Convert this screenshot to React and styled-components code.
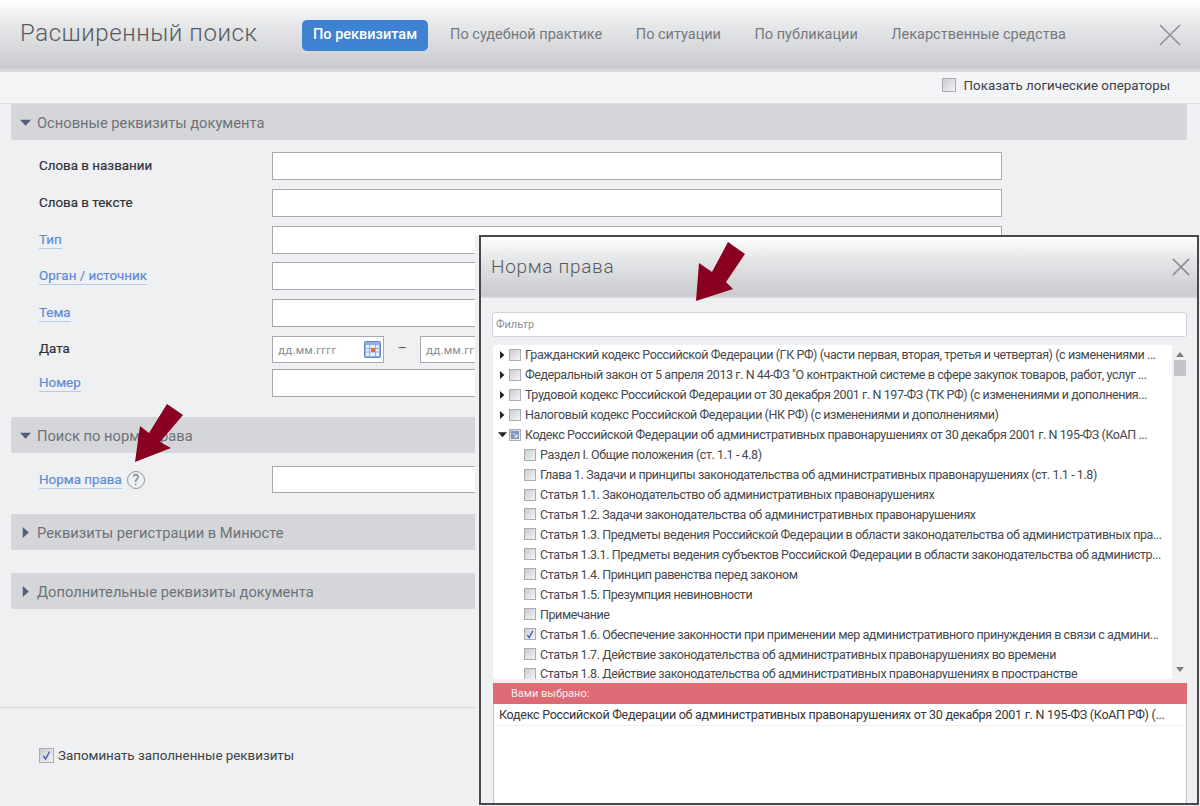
import React from "react";
import styled, { createGlobalStyle } from "styled-components";

const GlobalStyle = createGlobalStyle`
  html, body { margin: 0; padding: 0; background: #eff0f2; }
  body { font-family: Roboto, "Liberation Sans", sans-serif; }
  * { box-sizing: border-box; }
`;

const Page = styled.div`
  position: relative;
  width: 1200px;
  height: 806px;
  overflow: hidden;
  display: flex;
  flex-direction: column;
  background: #eff0f2;
`;

const Header = styled.header`
  height: 72px;
  flex: none;
  display: flex;
  align-items: flex-start;
  padding: 20px 19px 0 20px;
  background: linear-gradient(#ffffff, #e9eaec 30%, #c9cbce 94%, #d8d9dc 97%);
`;

const Title = styled.h1`
  margin: 0;
  width: 282px;
  font-size: 24px;
  line-height: 27px;
  font-weight: 300;
  letter-spacing: 0.57px;
  color: #565a60;
`;

const Tabs = styled.nav`
  display: flex;
  flex: 1;
  gap: 33.5px;
`;

const Tab = styled.span`
  height: 31px;
  line-height: 30px;
  font-size: 14.5px;
  font-weight: ${(p) => (p.$active ? 500 : 400)};
  color: ${(p) => (p.$active ? "#fff" : "#74787f")};
  background: ${(p) => (p.$active ? "#3f82d2" : "transparent")};
  border-radius: 5px;
  padding: ${(p) => (p.$active ? "0 11px" : "0")};
  margin-right: ${(p) => (p.$active ? "-11.5px" : "0")};
`;

const HeaderClose = styled.div`
  padding-top: 4px;
`;

const CloseIcon = styled.svg`
  display: block;
  flex: none;
  stroke: #8d9095;
  stroke-width: ${(p) => p.$weight || 1.6};
  fill: none;
`;

const Toolbar = styled.div`
  height: 32px;
  flex: none;
  display: flex;
  align-items: center;
  justify-content: flex-end;
  gap: 8px;
  padding: 0 30px 5px 0;
  background: #f3f4f6;
  border-bottom: 1px solid #dcdee0;
  font-size: 13.35px;
  color: #3d4046;
`;

const Box = styled.span`
  display: inline-flex;
  flex: none;
  align-items: center;
  justify-content: center;
  width: ${(p) => p.$size || 14}px;
  height: ${(p) => p.$size || 14}px;
  border: 1px solid #a9adb3;
  background: linear-gradient(135deg, #c9ccd1, #f4f5f6);
`;

const Form = styled.main`
  flex: 1;
  padding: 0 13px 0 11px;
`;

const Section = styled.div`
  height: 36px;
  display: flex;
  align-items: center;
  gap: 6px;
  padding: 2px 0 0 9px;
  margin-bottom: ${(p) => p.$after}px;
  background: #d4d6d9;
  border-radius: 2px;
  font-size: 14.7px;
  color: #6e7278;
`;

const Caret = styled.svg`
  display: block;
  flex: none;
  margin-top: ${(p) => (p.$lift ? "-2px" : "0")};
  fill: ${(p) => p.$color || "#4f5f7c"};
`;

const Row = styled.div`
  display: flex;
  align-items: center;
  min-height: 27px;
  padding-left: 28px;
  margin-bottom: ${(p) => p.$after}px;
`;

const Label = styled.span`
  width: 233px;
  flex: none;
  padding-bottom: 2px;
  font-size: 13.4px;
  color: #2f3237;
  -webkit-text-stroke: 0.2px #2f3237;
`;

const LinkLabel = styled.span`
  font-size: 13.4px;
  color: #5d8bd8;
  -webkit-text-stroke: 0.2px #5d8bd8;
  border-bottom: 1px solid #b5c9ea;
  padding-bottom: 1px;
`;

const LinkCell = styled.span`
  width: 233px;
  flex: none;
  display: flex;
  align-items: center;
  gap: 5px;
  margin-top: 1px;
`;

const Help = styled.span`
  width: 18px;
  height: 18px;
  border: 1.5px solid #96999d;
  border-radius: 50%;
  display: inline-flex;
  align-items: center;
  justify-content: center;
  font-size: 14px;
  color: #77797d;
`;

const Input = styled.div`
  width: 730px;
  height: ${(p) => p.$height || 28}px;
  background: #fff;
  border: 1.5px solid #a6a9af;
`;

const DateInput = styled.div`
  width: 112px;
  height: 27px;
  flex: none;
  display: flex;
  align-items: center;
  justify-content: space-between;
  padding: 0 2px 0 5px;
  background: #fff;
  border: 1.5px solid #a6a9af;
  font-size: 11.5px;
  letter-spacing: 0.2px;
  color: #8a8d92;
`;

const Dash = styled.span`
  width: 36px;
  padding-bottom: 4px;
  text-align: center;
  font-size: 14px;
  color: #55585d;
`;

const Footer = styled.footer`
  height: 99px;
  flex: none;
  display: flex;
  align-items: flex-start;
  gap: 4px;
  padding: 40px 0 0 39px;
  margin-right: 13px;
  border-top: 1.5px solid #d3d5d8;
  font-size: 13.35px;
  color: #3d4046;
`;

const Arrow = styled.svg`
  position: absolute;
  left: 0;
  top: 0;
  z-index: 5;
  pointer-events: none;
`;

const Dialog = styled.section`
  position: absolute;
  left: 479px;
  top: 235px;
  width: 720px;
  height: 570px;
  z-index: 2;
  display: flex;
  flex-direction: column;
  background: #eff0f2;
  border: 2px solid #46484b;
  box-shadow: -4px 0 0 #eff0f2;
`;

const DialogHeader = styled.div`
  height: 61px;
  flex: none;
  display: flex;
  align-items: center;
  justify-content: space-between;
  padding: 0 7px 2px 10px;
  background: linear-gradient(#ffffff, #e6e7e9 35%, #c9cbce 95%, #d8d9dc);
`;

const DialogTitle = styled.h2`
  margin: 0;
  font-size: 19px;
  font-weight: 300;
  letter-spacing: 0.7px;
  color: #565a60;
`;

const Filter = styled.div`
  height: 25px;
  flex: none;
  margin: 14px 10px 8px 11px;
  padding-left: 3px;
  display: flex;
  align-items: center;
  background: #fff;
  border: 1.5px solid #cfd2d6;
  border-radius: 3px;
  font-size: 11px;
  color: #8d9096;
`;

const TreeArea = styled.div`
  height: 334px;
  flex: none;
  display: flex;
  margin: 0 10px 4px 12px;
`;

const TreeList = styled.ul`
  width: 679px;
  flex: none;
  margin: 0;
  padding: 0;
  list-style: none;
  overflow: hidden;
  background: #fff;
`;

const TreeRow = styled.li`
  height: 19.95px;
  display: flex;
  align-items: center;
  padding-left: ${(p) => (p.$child ? 31 : 5)}px;
  white-space: nowrap;
  font-size: 12.5px;
  letter-spacing: -0.42px;
  color: #45484d;
`;

const Expander = styled.span`
  width: 11px;
  flex: none;
  display: flex;
`;

const TreeText = styled.span`
  margin-left: 4px;
`;

const Scrollbar = styled.div`
  flex: 1;
  display: flex;
  flex-direction: column;
  align-items: center;
  padding-top: 7px;
`;

const Thumb = styled.div`
  width: 12px;
  height: 16px;
  margin: 3px 0 auto;
  background: #c2c4c7;
`;

const ScrollArrow = styled.svg`
  display: block;
  fill: #7b7e83;
  margin-bottom: ${(p) => p.$after || 0}px;
`;

const ChosenBar = styled.div`
  height: 21px;
  flex: none;
  margin: 0 10px 0 12px;
  padding-left: 18px;
  display: flex;
  align-items: center;
  background: #dd6a75;
  font-size: 11px;
  color: #fbeeef;
`;

const ChosenList = styled.div`
  flex: 1;
  margin: 0 10px 0 12px;
  background: #fff;
  border-left: 1px solid #bfc1c5;
  border-right: 1px solid #bfc1c5;
`;

const ChosenRow = styled.div`
  height: 22px;
  display: flex;
  align-items: center;
  padding-left: 5px;
  white-space: nowrap;
  border-bottom: 1px solid #f0f0f0;
  font-size: 12.5px;
  letter-spacing: -0.27px;
  color: #33363b;
`;

const tabs = ["По судебной практике", "По ситуации", "По публикации", "Лекарственные средства"];

const treeRows = [
  { text: "Гражданский кодекс Российской Федерации (ГК РФ) (части первая, вторая, третья и четвертая) (с изменениями ...", caret: "right" },
  { text: "Федеральный закон от 5 апреля 2013 г. N 44-ФЗ \"О контрактной системе в сфере закупок товаров, работ, услуг ...", caret: "right" },
  { text: "Трудовой кодекс Российской Федерации от 30 декабря 2001 г. N 197-ФЗ (ТК РФ) (с изменениями и дополнения...", caret: "right" },
  { text: "Налоговый кодекс Российской Федерации (НК РФ) (с изменениями и дополнениями)", caret: "right" },
  { text: "Кодекс Российской Федерации об административных правонарушениях от 30 декабря 2001 г. N 195-ФЗ (КоАП ...", caret: "down", mark: "partial" },
  { text: "Раздел I. Общие положения (ст. 1.1 - 4.8)" },
  { text: "Глава 1. Задачи и принципы законодательства об административных правонарушениях (ст. 1.1 - 1.8)" },
  { text: "Статья 1.1. Законодательство об административных правонарушениях" },
  { text: "Статья 1.2. Задачи законодательства об административных правонарушениях" },
  { text: "Статья 1.3. Предметы ведения Российской Федерации в области законодательства об административных пра..." },
  { text: "Статья 1.3.1. Предметы ведения субъектов Российской Федерации в области законодательства об администр..." },
  { text: "Статья 1.4. Принцип равенства перед законом" },
  { text: "Статья 1.5. Презумпция невиновности" },
  { text: "Примечание" },
  { text: "Статья 1.6. Обеспечение законности при применении мер административного принуждения в связи с админи...", mark: "check" },
  { text: "Статья 1.7. Действие законодательства об административных правонарушениях во времени" },
  { text: "Статья 1.8. Действие законодательства об административных правонарушениях в пространстве" },
];

function Cross({ size, weight }) {
  return (
    <CloseIcon width={size} height={size} viewBox="0 0 22 22" $weight={weight}>
      <path d="M1 1 L21 21 M21 1 L1 21" />
    </CloseIcon>
  );
}

function CaretIcon({ dir, size = 10, color, lift }) {
  return (
    <Caret width={size} height={size} viewBox="0 0 10 10" $color={color} $lift={lift}>
      {dir === "down" ? <path d="M0 2.5 H10 L5 8 Z" /> : <path d="M2.5 0 L8 5 L2.5 10 Z" />}
    </Caret>
  );
}

function Check() {
  return (
    <svg width="11" height="11" viewBox="0 0 11 11">
      <path d="M2.5 6 L4.6 9 L8.6 1.5" fill="none" stroke="#4a62b0" strokeWidth="1.5" />
    </svg>
  );
}

function Partial() {
  return (
    <svg width="10" height="10" viewBox="0 0 10 10">
      <rect x="1" y="1" width="8" height="8" fill="#7f97c4" />
      <path d="M3 3 L7 7 M7 4 V7 H4" fill="none" stroke="#e8edf6" strokeWidth="1" />
    </svg>
  );
}

function CalendarIcon() {
  return (
    <svg width="17" height="17" viewBox="0 0 17 17">
      <rect x="0.5" y="0.5" width="16" height="16" rx="1" fill="#8fb0e4" stroke="#5f87c8" />
      <rect x="2" y="4" width="13" height="11" fill="#e8eef9" />
      <path d="M2 7.5 H15 M2 11 H15 M5.5 4 V15 M11.5 4 V15" stroke="#8fb0e4" />
      <rect x="7" y="7" width="4" height="4" fill="#e2683f" />
    </svg>
  );
}

function Field({ name }) {
  return (
    <LinkCell>
      <LinkLabel>{name}</LinkLabel>
    </LinkCell>
  );
}

function App() {
  return (
    <>
      <GlobalStyle />
      <Page>
        <Header>
          <Title>Расширенный поиск</Title>
          <Tabs>
            <Tab $active>По реквизитам</Tab>
            {tabs.map((t) => (
              <Tab key={t}>{t}</Tab>
            ))}
          </Tabs>
          <HeaderClose>
            <Cross size={22} />
          </HeaderClose>
        </Header>
        <Toolbar>
          <Box />
          <span>Показать логические операторы</span>
        </Toolbar>
        <Form>
          <Section $after={12}>
            <CaretIcon dir="down" size={11} lift />
            Основные реквизиты документа
          </Section>
          <Row $after={9}>
            <Label>Слова в названии</Label>
            <Input />
          </Row>
          <Row $after={9}>
            <Label>Слова в тексте</Label>
            <Input />
          </Row>
          <Row $after={8}>
            <Field name="Тип" />
            <Input />
          </Row>
          <Row $after={9}>
            <Field name="Орган / источник" />
            <Input />
          </Row>
          <Row $after={9}>
            <Field name="Тема" />
            <Input />
          </Row>
          <Row $after={6}>
            <Label>Дата</Label>
            <DateInput>
              дд.мм.гггг
              <CalendarIcon />
            </DateInput>
            <Dash>–</Dash>
            <DateInput>дд.мм.гггг</DateInput>
          </Row>
          <Row $after={20}>
            <Field name="Номер" />
            <Input />
          </Row>
          <Section $after={13}>
            <CaretIcon dir="down" size={11} lift />
            Поиск по норме права
          </Section>
          <Row $after={21}>
            <LinkCell>
              <LinkLabel>Норма права</LinkLabel>
              <Help>?</Help>
            </LinkCell>
            <Input $height={27} />
          </Row>
          <Section $after={23}>
            <CaretIcon dir="right" size={11} lift />
            Реквизиты регистрации в Минюсте
          </Section>
          <Section $after={0}>
            <CaretIcon dir="right" size={11} lift />
            Дополнительные реквизиты документа
          </Section>
        </Form>
        <Footer>
          <Box $size={15}>
            <Check />
          </Box>
          <span>Запоминать заполненные реквизиты</span>
        </Footer>

        <Dialog>
          <DialogHeader>
            <DialogTitle>Норма права</DialogTitle>
            <Cross size={18} weight={2} />
          </DialogHeader>
          <Filter>Фильтр</Filter>
          <TreeArea>
            <TreeList>
              {treeRows.map((row) => (
                <TreeRow key={row.text} $child={!row.caret}>
                  {row.caret && (
                    <Expander>
                      <CaretIcon dir={row.caret} size={row.caret === "down" ? 9 : 8} color="#222428" />
                    </Expander>
                  )}
                  <Box $size={12}>
                    {row.mark === "check" && <Check />}
                    {row.mark === "partial" && <Partial />}
                  </Box>
                  <TreeText>{row.text}</TreeText>
                </TreeRow>
              ))}
            </TreeList>
            <Scrollbar>
              <ScrollArrow width="8" height="5" viewBox="0 0 8 5">
                <path d="M0 5 L4 0 L8 5 Z" />
              </ScrollArrow>
              <Thumb />
              <ScrollArrow width="8" height="5" viewBox="0 0 8 5" $after={7}>
                <path d="M0 0 L8 0 L4 5 Z" />
              </ScrollArrow>
            </Scrollbar>
          </TreeArea>
          <ChosenBar>Вами выбрано:</ChosenBar>
          <ChosenList>
            <ChosenRow>Кодекс Российской Федерации об административных правонарушениях от 30 декабря 2001 г. N 195-ФЗ (КоАП РФ) (...</ChosenRow>
          </ChosenList>
        </Dialog>

        <Arrow width="1200" height="806" viewBox="0 0 1200 806">
          <path d="M167 404 L183 415 L160 442 L171 448 L135 462 L140 426 L149 433 Z" fill="#8a0020" />
          <path d="M728 242 L745 254 L726 282 L733 289 L696 301 L699 263 L712 272 Z" fill="#8a0020" />
        </Arrow>
      </Page>
    </>
  );
}

export default App;
